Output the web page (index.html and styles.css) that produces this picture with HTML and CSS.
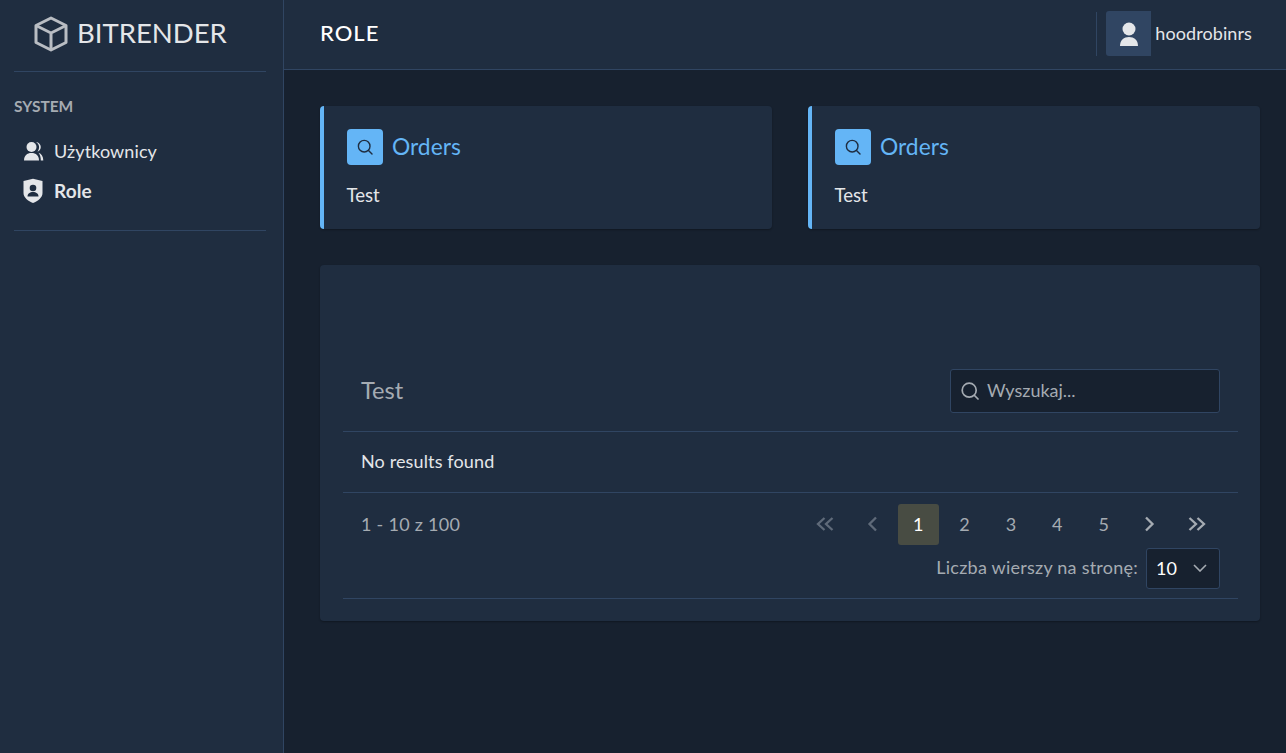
FILE: index.html
```html
<!DOCTYPE html>
<html lang="pl">
<head>
<meta charset="utf-8">
<title>Role</title>
<link rel="stylesheet" href="styles.css">
</head>
<body>
<div class="app">
  <aside class="sidebar">
    <div class="brand">
      <svg class="brand-icon" viewBox="0 0 34 36" width="34" height="36" fill="none" stroke="#b9bdc3" stroke-width="3" stroke-linejoin="round"><path d="M17 2 32 9.5V26.5L17 34 2 26.5V9.5Z"/><path d="M2 9.5 17 17 32 9.5M17 17V34"/></svg>
      <span class="brand-name">BITRENDER</span>
    </div>
    <div class="side-section">
      <div class="side-title">SYSTEM</div>
      <nav class="side-nav">
        <a class="side-link">
          <svg class="side-icon" viewBox="0 0 20 20" width="20" height="20" fill="#e4e6e9"><circle cx="8" cy="6" r="5"/><path d="M.5 19.500C.5 14.500 3.500 12 8 12s7.500 2.500 7.500 7.500Z"/><path d="M12.500 1c2.900.3 4.800 2.400 4.800 5 0 2.200-1.400 4-3.400 4.700 1.100-1.300 1.700-2.900 1.700-4.700S14.500 2.200 12.500 1ZM15 11.700c3 .9 4.800 3.700 4.800 7.800h-2.500c0-3.300-.8-5.900-2.300-7.800Z"/></svg>
          <span>Użytkownicy</span>
        </a>
        <a class="side-link is-active">
          <svg class="side-icon shield" viewBox="0 0 22 26" width="22" height="26"><path fill="#e4e6e9" d="M11 .8 20.500 3V15c0 4.500-4.500 8-9.500 10C6 23 1.500 19.500 1.500 15V3Z"/><circle cx="11" cy="10" r="3.300" fill="#1f2d40"/><path fill="#1f2d40" d="M5.500 18.500c0-3 2.400-4.500 5.500-4.500s5.500 1.500 5.500 4.500Z"/></svg>
          <span class="side-active-label">Role</span>
        </a>
      </nav>
    </div>
  </aside>
  <div class="main">
    <header class="topbar">
      <h1 class="page-title">ROLE</h1>
      <div class="user">
        <span class="avatar">
          <svg viewBox="0 0 20 26" width="20" height="26" fill="#e4e6e9"><circle cx="10" cy="8" r="6.500"/><path d="M1 25c0-6 4-9 9-9s9 3 9 9Z"/></svg>
        </span>
        <span class="user-name">hoodrobinrs</span>
      </div>
    </header>
    <main class="content">
      <section class="stat-grid">
        <article class="stat">
          <div class="stat-head">
            <span class="stat-icon"><svg viewBox="0 0 16 16" width="16" height="16" fill="none" stroke="#1f2d40" stroke-width="1.400" stroke-linecap="round"><circle cx="7.200" cy="7.200" r="5.800"/><path d="m11.500 11.500 3.500 3.500"/></svg></span>
            <span class="stat-title">Orders</span>
          </div>
          <p class="stat-text">Test</p>
        </article>
        <article class="stat">
          <div class="stat-head">
            <span class="stat-icon"><svg viewBox="0 0 16 16" width="16" height="16" fill="none" stroke="#1f2d40" stroke-width="1.400" stroke-linecap="round"><circle cx="7.200" cy="7.200" r="5.800"/><path d="m11.500 11.500 3.500 3.500"/></svg></span>
            <span class="stat-title">Orders</span>
          </div>
          <p class="stat-text">Test</p>
        </article>
      </section>
      <section class="table-card">
        <div class="table-head">
          <h2 class="table-title">Test</h2>
          <label class="search">
            <svg viewBox="0 0 18 18" width="18" height="18" fill="none" stroke="#a5abb2" stroke-width="1.700" stroke-linecap="round"><circle cx="8.200" cy="8.200" r="7"/><path d="m13.500 13.500 3.500 3.500"/></svg>
            <span class="search-ph">Wyszukaj...</span>
          </label>
        </div>
        <div class="table-empty">No results found</div>
        <div class="pager">
          <span class="pager-info">1 - 10 z 100</span>
          <div class="pager-right">
            <div class="pages">
              <span class="page dim"><svg viewBox="0 0 18 14" width="18" height="14" fill="none" stroke="currentColor" stroke-width="2.300"><path d="M8.500 1 2 7l6.500 6M16.500 1 10 7l6.500 6"/></svg></span>
              <span class="page dim"><svg viewBox="0 0 10 16" width="10" height="16" fill="none" stroke="currentColor" stroke-width="2.300"><path d="M9 1.500 2.500 8 9 14.500"/></svg></span>
              <span class="page current">1</span>
              <span class="page">2</span>
              <span class="page">3</span>
              <span class="page">4</span>
              <span class="page">5</span>
              <span class="page"><svg viewBox="0 0 10 16" width="10" height="16" fill="none" stroke="currentColor" stroke-width="2.300"><path d="M1 1.500 7.500 8 1 14.500"/></svg></span>
              <span class="page"><svg viewBox="0 0 18 14" width="18" height="14" fill="none" stroke="currentColor" stroke-width="2.300"><path d="M1.500 1 8 7l-6.500 6M9.500 1 16 7l-6.500 6"/></svg></span>
            </div>
            <div class="rows">
              <span class="rows-label">Liczba wierszy na stronę:</span>
              <span class="rows-select"><span>10</span><svg viewBox="0 0 14 8" width="14" height="8" fill="none" stroke="#a5abb2" stroke-width="1.600"><path d="m1 1 6 6 6-6"/></svg></span>
            </div>
          </div>
        </div>
      </section>
    </main>
  </div>
</div>
</body>
</html>
```
FILE: styles.css
```css
* { box-sizing: border-box; }
html, body { margin: 0; height: 100%; }
body {
  background: #17212f;
  color: rgba(255, 255, 255, .87);
  font-family: "Lato", "Noto Sans", sans-serif;
  font-size: 18px;
  overflow: hidden;
}
.app { display: flex; height: 753px; }
.sidebar {
  width: 284px;
  flex: none;
  background: #1f2d40;
  border-right: 1px solid #304562;
  padding: 0 17px 0 14px;
}
.brand {
  height: 72px;
  display: flex;
  align-items: center;
  gap: 9px;
  padding: 0 0 3px 20px;
  border-bottom: 1px solid #304562;
}
.brand-name { font-size: 27.5px; line-height: 34px; color: #e4e6e9; padding-bottom: 2px; }
.side-section { padding: 25px 0 19px; border-bottom: 1px solid #304562; }
.side-title { font-size: 15.5px; line-height: 18px; font-weight: 700; color: #a5abb2; }
.side-nav { margin-top: 16px; display: flex; flex-direction: column; }
.side-link {
  display: flex;
  align-items: center;
  height: 40px;
  padding-left: 9px;
  gap: 10px;
  font-size: 18px;
  letter-spacing: .1px;
  color: #e4e6e9;
}
.side-icon { flex: none; width: 21px; }
.shield { margin-left: -1px; width: 22px; margin-right: 0; }
.is-active { font-weight: 700; font-size: 19px; }
.side-active-label { padding-bottom: 2px; }
.main { flex: 1; min-width: 0; display: flex; flex-direction: column; }
.topbar {
  height: 70px;
  background: #1f2d40;
  border-bottom: 1px solid #304562;
  display: flex;
  align-items: center;
  justify-content: space-between;
  padding: 0 34px 2px 36px;
}
.page-title { margin: 0 0 2px; font-size: 22px; font-weight: 500; line-height: 28px; letter-spacing: 1px; color: #fff; }
.user {
  display: flex;
  align-items: center;
  height: 44px;
  padding-left: 9px;
  gap: 4px;
  border-left: 1px solid #304562;
}
.avatar {
  width: 45px;
  height: 45px;
  background: #304562;
  border-radius: 3px 0 0 3px;
  display: flex;
  align-items: center;
  justify-content: center;
}
.user-name { font-size: 18px; letter-spacing: .1px; color: #e4e6e9; padding-bottom: 1px; }
.content { padding: 36px 26px 0 36px; display: flex; flex-direction: column; gap: 36px; }
.stat-grid { display: grid; grid-template-columns: 452px 452px; gap: 36px; }
.stat {
  height: 123px;
  background: #1f2d40;
  border-left: 4px solid #64b5f6;
  border-radius: 4px;
  padding: 23px 23px 0;
  box-shadow: 0 1px 2px rgba(0, 0, 0, .3);
}
.stat-head { display: flex; align-items: center; gap: 9px; height: 36px; }
.stat-icon {
  width: 36px;
  height: 36px;
  background: #64b5f6;
  border-radius: 4px;
  display: flex;
  align-items: center;
  justify-content: center;
}
.stat-title { font-size: 22.8px; color: #64b5f6; line-height: 36px; padding-bottom: 2px; }
.stat-text { margin: 17px 0 0 -.5px; font-size: 18.6px; line-height: 26px; color: #e4e6e9; }
.table-card {
  width: 940px;
  height: 356px;
  background: #1f2d40;
  border-radius: 4px;
  padding: 86px 22px 0 23px;
  box-shadow: 0 1px 2px rgba(0, 0, 0, .3);
}
.table-head {
  height: 81px;
  display: flex;
  align-items: center;
  justify-content: space-between;
  padding: 0 18px;
  border-bottom: 1px solid #304562;
}
.table-title { margin: 0 0 3px; font-size: 23.6px; font-weight: 400; color: #a5abb2; }
.search {
  width: 270px;
  height: 44px;
  background: #17212f;
  border: 1px solid #304562;
  border-radius: 3px;
  display: flex;
  align-items: center;
  gap: 8px;
  padding: 0 10px;
}
.search-ph { font-size: 18px; color: #a5abb2; padding-bottom: 2px; }
.table-empty {
  height: 61px;
  display: flex;
  align-items: center;
  padding: 0 18px 2px;
  border-bottom: 1px solid #304562;
  font-size: 18px;
  letter-spacing: .13px;
  color: #e4e6e9;
}
.pager {
  height: 106px;
  display: flex;
  justify-content: space-between;
  padding: 11px 18px 0;
  border-bottom: 1px solid #304562;
}
.pager-info { font-size: 18px; line-height: 40px; letter-spacing: .27px; color: #a5abb2; }
.pager-right { display: flex; flex-direction: column; align-items: flex-end; }
.pages { display: flex; gap: 5.400px; margin-right: 3px; }
.page {
  width: 41px;
  height: 41px;
  border-radius: 3px;
  display: flex;
  align-items: center;
  justify-content: center;
  font-size: 18px;
  padding-bottom: 1px;
  color: #a5abb2;
}
.page.dim { color: #5f6a79; }
.page.current { background: #484c43; color: #fff; }
.rows { display: flex; align-items: center; gap: 8px; margin-top: 3px; }
.rows-label { font-size: 18px; letter-spacing: .24px; color: #a5abb2; padding-bottom: 3px; }
.rows-select {
  width: 74px;
  height: 41px;
  background: #17212f;
  border: 1px solid #304562;
  border-radius: 3px;
  display: flex;
  align-items: center;
  justify-content: space-between;
  padding: 0 12px 2px 9px;
  font-size: 18px;
  color: #fff;
}
```
